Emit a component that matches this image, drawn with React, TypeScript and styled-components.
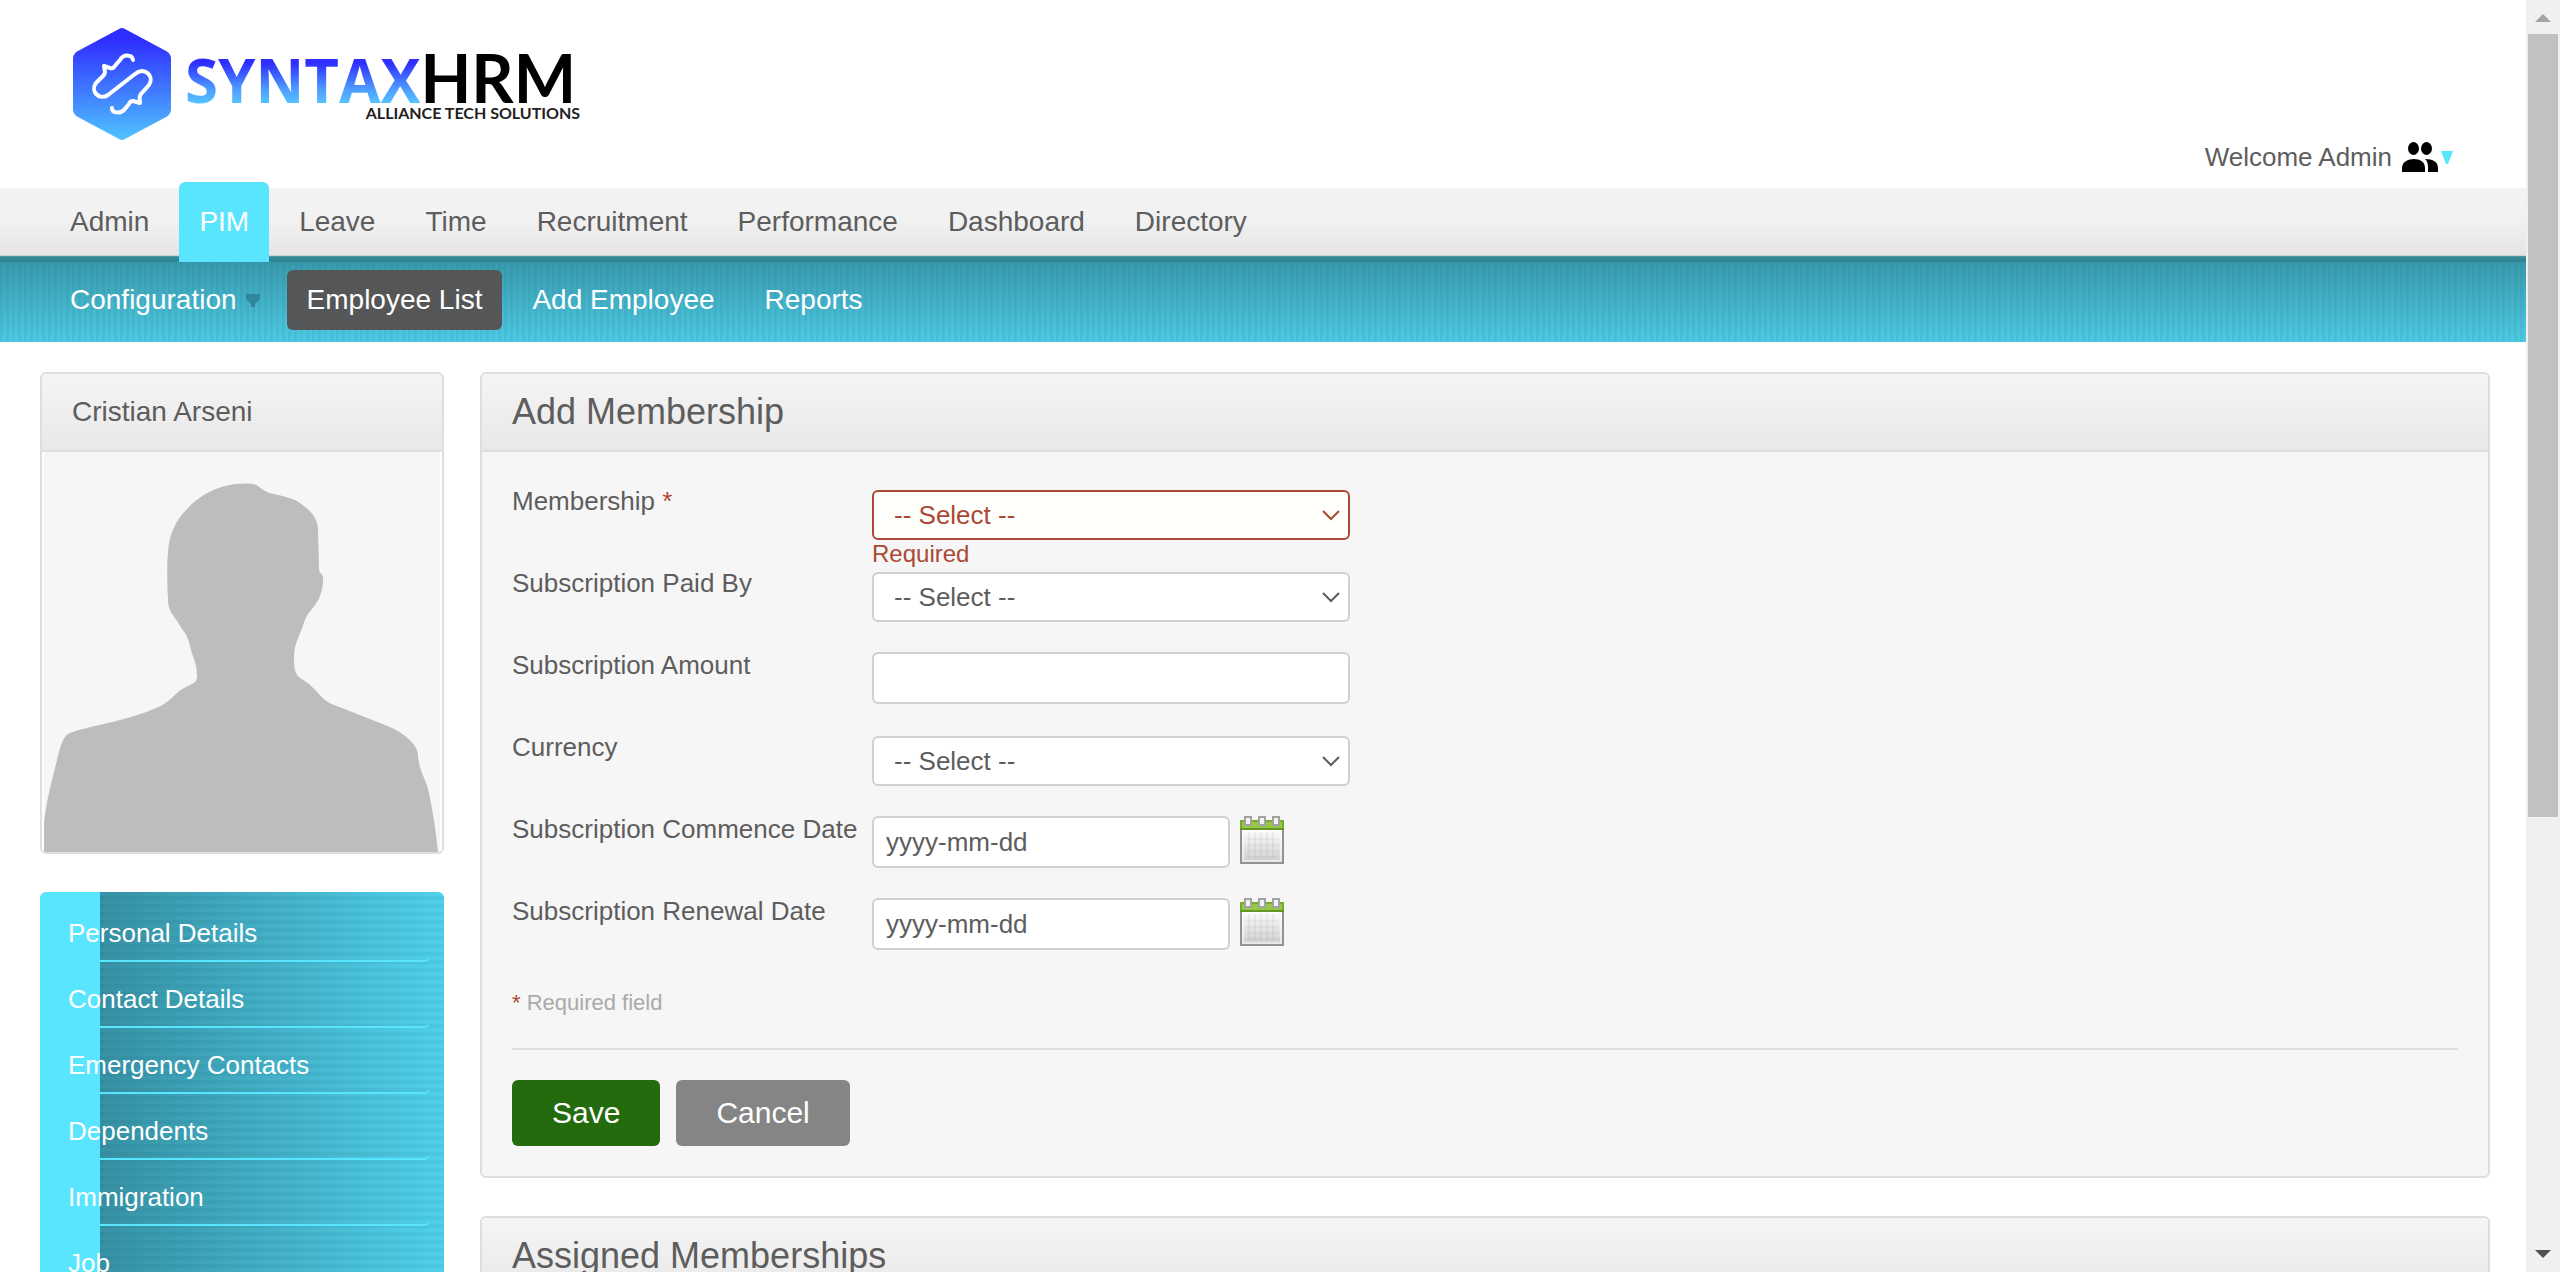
import React from "react";
import styled, { createGlobalStyle, css } from "styled-components";

const ink = "#5d5d5d";
const danger = "#aa4935";
const line = "#dedede";
const cyan = "#5ae5ff";

const GlobalStyle = createGlobalStyle`
  *, *::before, *::after { box-sizing: border-box; }
  body {
    margin: 0;
    background: #fff;
    color: ${ink};
    font-family: "Liberation Sans", Arial, Helvetica, sans-serif;
    font-size: 26px;
    line-height: 26px;
  }
  ul { list-style: none; margin: 0; padding: 0; }
  a { color: inherit; text-decoration: none; }
`;

const Window = styled.div`
  display: flex;
  height: 100vh;
  overflow: hidden;
`;

const Page = styled.div`
  flex: 1;
  min-width: 0;
`;

/* Scroll bar */
const ScrollTrack = styled.div`
  display: flex;
  flex-direction: column;
  align-items: center;
  width: 34px;
  background: #f0f0f0;
`;
const ScrollArrow = styled.svg`
  flex: none;
  width: 34px;
  height: 34px;
`;
const ScrollRail = styled.div`
  flex: 1;
  width: 30px;
`;
const ScrollThumb = styled.div`
  height: 65%;
  background: #c1c1c1;
`;

/* Header */
const Header = styled.header`
  display: flex;
  justify-content: space-between;
  align-items: flex-start;
  height: 182px;
  padding: 28px 73px 9px;
`;
const Brand = styled.a`
  display: flex;
  gap: 14px;
`;
const BrandMark = styled.svg`
  width: 98px;
  height: 112px;
`;
const BrandText = styled.span`
  display: flex;
  flex-direction: column;
  align-items: flex-end;
  padding-top: 25px;
  font-family: Lato, "Open Sans", sans-serif;
  color: #000;
`;
const WordMark = styled.span`
  display: flex;
  align-items: baseline;
  margin-right: 4px;
  font-size: 66px;
  line-height: 50px;
  font-weight: 700;
`;
const WordMarkAccent = styled.span`
  font-family: "Open Sans", sans-serif;
  font-size: 60px;
  color: transparent;
  background: linear-gradient(#2f2dff 8px, #4d9bff 34px, #55c4ff 48px);
  background-clip: text;
  -webkit-background-clip: text;
`;
const Tagline = styled.span`
  font-size: 16px;
  line-height: 16px;
  font-weight: 700;
  color: #222;
`;
const UserMenu = styled.button`
  display: flex;
  align-items: center;
  align-self: flex-end;
  height: 32px;
  padding: 0;
  border: 0;
  background: none;
  color: inherit;
  font: inherit;
`;
const PeopleIcon = styled.svg`
  width: 38px;
  height: 32px;
  margin: 0 2px 0 9px;
`;
const CaretIcon = styled.svg`
  width: 12px;
  height: 13px;
`;

/* Navigation */
const MainNav = styled.nav`
  height: 80px;
  padding: 0 50px;
  background: linear-gradient(
    #fff 6px, #f3f3f3 6px, #f2f2f2 36px, #e5e5e5 73px,
    #c9d6d8 73px, #c9d6d8 74px, #4d9ba8 74px, #338795 76px, #2f8290 80px
  );
`;
const NavList = styled.ul`
  display: flex;
  gap: 10px;
`;
const NavLink = styled.a<{ $active?: boolean }>`
  display: block;
  padding: 0 20px;
  font-size: 28px;
  line-height: 80px;
  ${(p) => p.$active && css`
    background: ${cyan};
    color: #fff;
    border-radius: 6px 6px 0 0;
  `}
`;
const SubNav = styled.nav`
  height: 80px;
  padding: 8px 50px;
  background:
    repeating-linear-gradient(90deg, rgba(0, 60, 80, 0.06) 0 3px, transparent 3px 6px),
    linear-gradient(#399aad, #4dcae3);
`;
const SubNavLink = styled.a<{ $active?: boolean }>`
  display: flex;
  align-items: center;
  gap: 9px;
  padding: 0 20px;
  font-size: 28px;
  line-height: 60px;
  color: #fff;
  ${(p) => p.$active && css`
    background: #555658;
    border-radius: 6px;
  `}
`;
const SubCaret = styled.svg`
  width: 14px;
  height: 13px;
  margin-right: -3px;
`;

/* Columns */
const Columns = styled.div`
  display: flex;
  align-items: flex-start;
  gap: 36px;
  padding: 30px 36px 0 40px;
`;
const Sidebar = styled.aside`
  display: flex;
  flex: none;
  flex-direction: column;
  gap: 38px;
  width: 404px;
`;
const Main = styled.main`
  display: flex;
  flex: 1;
  flex-direction: column;
  gap: 38px;
  min-width: 0;
`;
const Card = styled.section`
  overflow: hidden;
  border: 2px solid ${line};
  border-radius: 6px;
  background: #f6f6f6;
`;
const CardHead = styled.div`
  padding: 0 30px;
  border-bottom: 2px solid ${line};
  background: linear-gradient(#f5f5f5, #e8e8e8);
`;
const CardTitle = styled.h1<{ $small?: boolean }>`
  margin: 0;
  font-size: ${(p) => (p.$small ? 28 : 36)}px;
  line-height: 76px;
  font-weight: 400;
`;
const Portrait = styled.svg`
  display: block;
  width: 400px;
  height: 400px;
`;

/* Side menu */
const SideMenu = styled.ul`
  && {
    padding: 4px 14px 4px 0;
  }
  border-radius: 6px;
  background:
    linear-gradient(90deg, ${cyan} 60px, transparent 60px),
    repeating-linear-gradient(rgba(0, 60, 80, 0) 0 4px, rgba(0, 60, 80, 0.06) 4px 8px),
    linear-gradient(90deg, #3791a4 60px, #50d1eb);
`;
const SideItem = styled.li`
  border-bottom: 2px solid ${cyan};
  border-radius: 0 0 6px 6px;
`;
const SideLink = styled.a`
  display: block;
  padding: 10px 28px 0;
  line-height: 54px;
  color: #fff;
`;

/* Form */
const Form = styled.form`
  padding: 36px 30px 30px;
`;
const Row = styled.div`
  display: grid;
  grid-template-columns: 360px 1fr;
  align-items: start;
  min-height: 82px;
`;
const Star = styled.em`
  font-style: normal;
  color: ${danger};
`;
const Field = styled.div`
  display: flex;
  flex-direction: column;
  align-items: flex-start;
`;
const SelectBox = styled.div<{ $error?: boolean }>`
  display: grid;
  align-items: center;
  width: 478px;
  margin-top: 2px;
  color: ${(p) => (p.$error ? danger : ink)};
`;
const Select = styled.select<{ $error?: boolean }>`
  grid-area: 1 / 1;
  width: 100%;
  height: 50px;
  padding: 0 40px 0 20px;
  border: 2px solid ${(p) => (p.$error ? danger : "#d0d0d0")};
  border-radius: 6px;
  background: ${(p) => (p.$error ? "#fffffc" : "#fff")};
  color: inherit;
  font: inherit;
  appearance: none;
`;
const Chevron = styled.svg`
  grid-area: 1 / 1;
  justify-self: end;
  width: 20px;
  height: 12px;
  margin-right: 9px;
  pointer-events: none;
`;
const ErrorText = styled.span`
  font-size: 24px;
  line-height: 28px;
  color: ${danger};
`;
const DateLine = styled.div`
  display: flex;
  gap: 10px;
`;
const TextInput = styled.input<{ $date?: boolean }>`
  width: ${(p) => (p.$date ? 358 : 478)}px;
  height: 52px;
  padding: 0 12px;
  border: 2px solid #d0d0d0;
  border-radius: 6px;
  background: #fff;
  color: inherit;
  font: inherit;
`;
const IconButton = styled.button`
  display: block;
  height: 48px;
  padding: 0;
  border: 0;
  background: none;
`;
const Note = styled.p`
  margin: 0;
  padding: 10px 0 32px;
  border-bottom: 2px solid ${line};
  font-size: 22px;
  line-height: 26px;
  color: #aaa;
`;
const Actions = styled.div`
  display: flex;
  gap: 16px;
  padding-top: 30px;
`;
const Button = styled.button<{ $primary?: boolean }>`
  height: 66px;
  padding: 0 40px;
  border: 0;
  border-radius: 6px;
  background: ${(p) => (p.$primary ? "#246b0e" : "#858585")};
  color: #fff;
  font: inherit;
  font-size: 30px;
`;

const SelectField = ({ id, error }: { id: string; error?: boolean }) => (
  <SelectBox $error={error}>
    <Select id={id} $error={error}>
      <option>-- Select --</option>
    </Select>
    <Chevron viewBox="0 0 20 12" fill="none" stroke="currentColor" strokeWidth="2">
      <path d="M2 2L10 10L18 2" />
    </Chevron>
  </SelectBox>
);

const CalendarIcon = ({ id }: { id: string }) => (
  <svg width="44" height="48" viewBox="0 0 22 24" aria-hidden="true">
    <defs>
      <linearGradient id={id} x1="0" y1="0" x2="0" y2="1">
        <stop offset="0" stopColor="#fff" />
        <stop offset="1" stopColor="#cfcdcd" />
      </linearGradient>
    </defs>
    <rect x="0.5" y="6" width="21" height="17.5" fill={`url(#${id})`} stroke="#929292" />
    <rect x="1.5" y="7.5" width="19" height="15" fill="none" stroke="#fff" strokeOpacity=".5" />
    <path d="M4.500 8V21M7.500 8V21M10.500 8V21M13.500 8V21M16.500 8V21" stroke="#888" strokeOpacity=".1" />
    <path d="M3 11.500H19M3 14.500H19M3 17.500H19M3 20.500H19" stroke="#888" strokeOpacity=".08" />
    <rect x="0" y="2" width="22" height="5" fill="#78a932" />
    <rect x="1" y="3" width="20" height="3" fill="#95c944" />
    <rect x="0" y="6" width="22" height="1" fill="#659527" />
    {[2, 9, 16].map((x) => (
      <rect key={x} x={x + 0.5} y="0.5" width="3" height="4" fill="#f4f4f4" stroke="#a2a2a2" />
    ))}
  </svg>
);

const DateField = ({ id, label }: { id: string; label: string }) => (
  <Row>
    <label htmlFor={id}>{label}</label>
    <DateLine>
      <TextInput id={id} $date defaultValue="yyyy-mm-dd" />
      <IconButton type="button" aria-label={`Pick ${label}`}>
        <CalendarIcon id={`${id}-paper`} />
      </IconButton>
    </DateLine>
  </Row>
);

const modules = ["Admin", "PIM", "Leave", "Time", "Recruitment", "Performance", "Dashboard", "Directory"];
const pages = ["Configuration", "Employee List", "Add Employee", "Reports"];
const sections = ["Personal Details", "Contact Details", "Emergency Contacts", "Dependents", "Immigration", "Job"];

export default function App() {
  return (
    <>
      <GlobalStyle />
      <Window>
        <Page>
          <Header>
            <Brand href="#" aria-label="SyntaxHRM">
              <BrandMark viewBox="0 0 98 112">
                <defs>
                  <linearGradient id="mark" x1="0" y1="0" x2="0" y2="1">
                    <stop offset="0.1" stopColor="#2f2dff" />
                    <stop offset="1" stopColor="#50c4ff" />
                  </linearGradient>
                </defs>
                <path
                  fill="url(#mark)"
                  d="M46 1Q49 -1 52 1L94 23.500Q98 26 98 31V81Q98 86 94 88.500L52 111Q49 113 46 111L4 88.500Q0 86 0 81V31Q0 26 4 23.500Z"
                />
                <path
                  fill="none"
                  stroke="#fff"
                  strokeWidth="4"
                  strokeLinecap="round"
                  strokeLinejoin="round"
                  d="M60 32C59 26 50 26 47 32L41 39Q40 41 37 40L31 38L32 44Q32 46 30 48L23 55C17 63 26 73 35 67L62 46C71 38 82 48 76 57L68 66Q66 68 67 75L60 73Q57 73 56 76L51 82C47 86 38 85 39 80"
                />
              </BrandMark>
              <BrandText>
                <WordMark>
                  <WordMarkAccent>SYNTAX</WordMarkAccent>
                  HRM
                </WordMark>
                <Tagline>ALLIANCE TECH SOLUTIONS</Tagline>
              </BrandText>
            </Brand>
            <UserMenu type="button">
              Welcome Admin
              <PeopleIcon viewBox="0 0 38 32">
                <ellipse cx="12.500" cy="7.500" rx="5.500" ry="6.500" />
                <ellipse cx="25.500" cy="7.500" rx="5.500" ry="6.500" />
                <path d="M1 31V27C1 21 7 18 13 18S24 21 24 27V31Z" />
                <path d="M24 18C32 18 37 21 37 27V31H27V26C27 22 26 20 24 18Z" />
              </PeopleIcon>
              <CaretIcon viewBox="0 0 12 13">
                <path d="M0 0H12L7 13H5Z" fill={cyan} />
              </CaretIcon>
            </UserMenu>
          </Header>

          <MainNav>
            <NavList>
              {modules.map((name) => (
                <li key={name}>
                  <NavLink href="#" $active={name === "PIM"}>{name}</NavLink>
                </li>
              ))}
            </NavList>
          </MainNav>
          <SubNav>
            <NavList>
              {pages.map((name) => (
                <li key={name}>
                  <SubNavLink href="#" $active={name === "Employee List"}>
                    {name}
                    {name === "Configuration" && (
                      <SubCaret viewBox="0 0 14 13">
                        <path d="M0 0H14V5L9 10V13H5V10L0 5Z" fill="#2f8799" />
                      </SubCaret>
                    )}
                  </SubNavLink>
                </li>
              ))}
            </NavList>
          </SubNav>

          <Columns>
            <Sidebar>
              <Card>
                <CardHead>
                  <CardTitle as="h2" $small>Cristian Arseni</CardTitle>
                </CardHead>
                <Portrait viewBox="0 0 400 400" role="img" aria-label="Employee photo">
                  <path fill="#fff" d="M0 0H2V400H0ZM398 0H400V400H398Z" />
                  <path
                    fill="#bdbdbd"
                    d="M2 400V370C5 345 11 325 15 308C18 295 21 285 26 282C32 278 60 273 82 267C98 262 112 258 122 252C132 245 136 239 142 236C150 231 155 232 155 224C155 210 150 205 147 190C144 180 141 180 137 172C132 163 126 160 126 148C125 130 125 110 126 100C127 82 134 68 145 57C157 43 176 34 194 32C203 31 212 31 216 34C222 39 226 41 232 42C240 44 252 46 258 51C268 58 276 66 276 78L277 115C277 125 282 118 281 130C280 145 274 152 269 158C262 167 263 169 259 179C255 189 252 194 252 206C252 216 253 222 258 226C264 229 270 234 276 241C286 252 290 252 300 256C316 262 332 269 348 275C362 281 376 293 376 303C377 320 384 326 387 341C391 360 394 380 396 400Z"
                  />
                </Portrait>
              </Card>
              <SideMenu>
                {sections.map((name) => (
                  <SideItem key={name}>
                    <SideLink href="#">{name}</SideLink>
                  </SideItem>
                ))}
              </SideMenu>
            </Sidebar>

            <Main>
              <Card>
                <CardHead>
                  <CardTitle>Add Membership</CardTitle>
                </CardHead>
                <Form>
                  <Row>
                    <label htmlFor="membership">Membership <Star>*</Star></label>
                    <Field>
                      <SelectField id="membership" error />
                      <ErrorText>Required</ErrorText>
                    </Field>
                  </Row>
                  <Row>
                    <label htmlFor="paid-by">Subscription Paid By</label>
                    <SelectField id="paid-by" />
                  </Row>
                  <Row>
                    <label htmlFor="amount">Subscription Amount</label>
                    <TextInput id="amount" />
                  </Row>
                  <Row>
                    <label htmlFor="currency">Currency</label>
                    <SelectField id="currency" />
                  </Row>
                  <DateField id="commence" label="Subscription Commence Date" />
                  <DateField id="renewal" label="Subscription Renewal Date" />
                  <Note><Star>*</Star> Required field</Note>
                  <Actions>
                    <Button type="button" $primary>Save</Button>
                    <Button type="button">Cancel</Button>
                  </Actions>
                </Form>
              </Card>
              <Card>
                <CardHead>
                  <CardTitle as="h2">Assigned Memberships</CardTitle>
                </CardHead>
              </Card>
            </Main>
          </Columns>
        </Page>

        <ScrollTrack aria-hidden="true">
          <ScrollArrow viewBox="0 0 34 34"><path d="M9 22L17 14L25 22Z" fill="#a3a3a3" /></ScrollArrow>
          <ScrollRail><ScrollThumb /></ScrollRail>
          <ScrollArrow viewBox="0 0 34 34"><path d="M9 12H25L17 20Z" fill="#505050" /></ScrollArrow>
        </ScrollTrack>
      </Window>
    </>
  );
}
